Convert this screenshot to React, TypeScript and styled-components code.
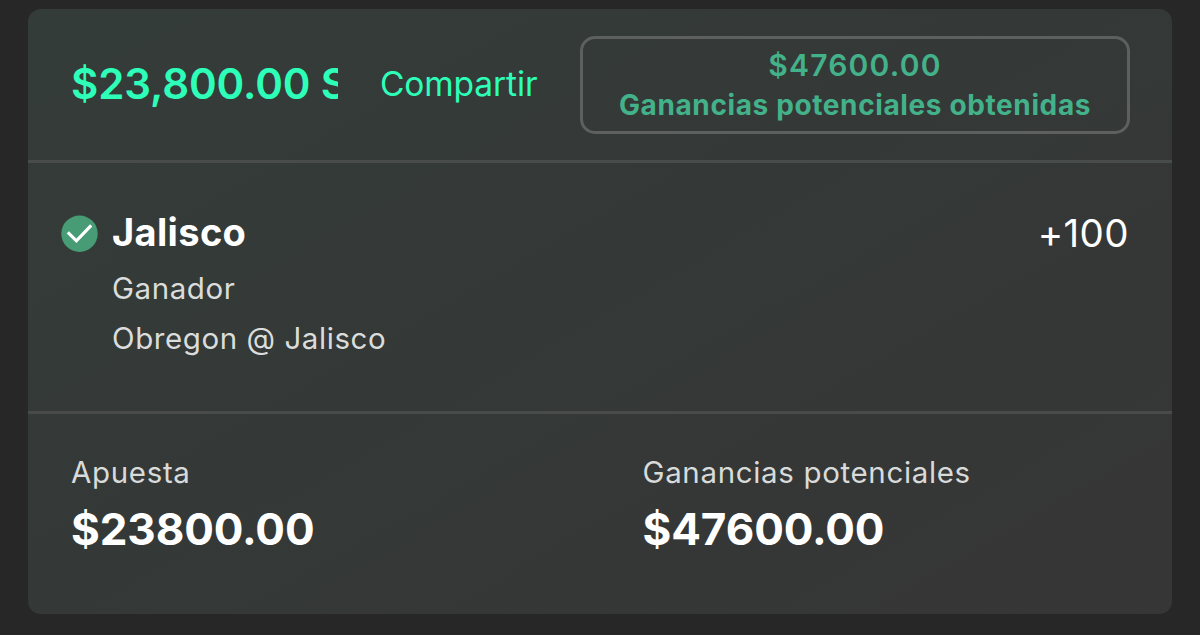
import styled, { createGlobalStyle } from 'styled-components';

const GlobalStyle = createGlobalStyle`
  * {
    box-sizing: border-box;
  }
  body {
    margin: 0;
    background-color: #272727;
    font-family: Inter, "Liberation Sans", sans-serif;
  }
`;

const Page = styled.main`
  height: 635px;
  padding: 9px 28px 21px;
  overflow: hidden;
`;

const Card = styled.article`
  display: flex;
  flex-direction: column;
  height: 605px;
  border-radius: 13px;
  background: linear-gradient(150deg, #343c39 0%, #343937 45%, #353736 75%, #373636 100%);
  overflow: hidden;
  white-space: nowrap;
`;

const Header = styled.header`
  display: flex;
  align-items: center;
  height: 154px;
  padding: 0 42px 0 43px;
  border-bottom: 3px solid #484c4b;
`;

const BetTitle = styled.h2`
  width: 267px;
  margin: 0 42px 2px 0;
  overflow: hidden;
  color: #2dffb9;
  font-size: 42px;
  font-weight: 600;
  line-height: 56px;
  letter-spacing: -0.1px;
`;

const ShareButton = styled.button`
  width: 158px;
  margin: 0 42px 2px 0;
  padding: 0;
  border: none;
  background: none;
  color: #2dffb9;
  font-family: inherit;
  font-size: 33.5px;
  line-height: 40px;
  letter-spacing: -0.1px;
  text-align: left;
  white-space: nowrap;
`;

const EarningsBox = styled.div`
  display: flex;
  flex-direction: column;
  flex: 1;
  align-items: center;
  justify-content: center;
  height: 98px;
  border: 3px solid #5d605f;
  border-radius: 15px;
  color: #43b189;
  line-height: 40px;
`;

const EarningsAmount = styled.span`
  font-size: 30px;
  font-weight: 600;
  letter-spacing: 1.2px;
`;

const EarningsLabel = styled.span`
  font-size: 28px;
  font-weight: 700;
  letter-spacing: 0.62px;
`;

const Selection = styled.section`
  display: flex;
  height: 251px;
  padding: 46px 43px 0 33px;
  border-bottom: 3px solid #484b4a;
`;

const StatusIcon = styled.svg`
  flex-shrink: 0;
  width: 37px;
  height: 37px;
  margin: 6px 14px 0 0;
`;

const SelectionInfo = styled.div`
  flex: 1;
`;

const Team = styled.h3`
  margin: 0 0 8px;
  color: #ffffff;
  font-size: 38px;
  font-weight: 700;
  line-height: 46px;
  letter-spacing: 0.35px;
`;

const Detail = styled.p`
  margin: 0;
  color: #dbdddc;
  font-size: 29.5px;
  line-height: 50px;
  letter-spacing: 0.57px;
`;

const Odds = styled.span`
  color: #ffffff;
  font-size: 38.5px;
  line-height: 48px;
  letter-spacing: 0.4px;
`;

const Footer = styled.footer`
  display: grid;
  grid-template-columns: 1fr 1fr;
  padding: 38px 0 0 43px;
`;

const Stat = styled.div<{ $offset?: number }>`
  padding-left: ${props => props.$offset || 0}px;
`;

const StatLabel = styled.p`
  margin: 0 0 9px;
  color: #d9dbda;
  font-size: 29.5px;
  line-height: 40px;
  letter-spacing: 0.65px;
`;

const StatValue = styled.p`
  margin: 0;
  color: #ffffff;
  font-size: 44px;
  font-weight: 700;
  line-height: 56px;
  letter-spacing: -0.1px;
`;

const WonIcon = () => (
  <StatusIcon viewBox="0 0 37 37">
    <circle cx="18.5" cy="18.7" r="18.2" fill="#479c75" />
    <path d="M6.8 17.4 L15.4 25.8 L30.2 10.4" fill="none" stroke="#ffffff" strokeWidth="3.2" />
  </StatusIcon>
);

export default function App() {
  return (
    <>
      <GlobalStyle />
      <Page>
        <Card>
          <Header>
            <BetTitle>$23,800.00 S</BetTitle>
            <ShareButton>Compartir</ShareButton>
            <EarningsBox>
              <EarningsAmount>$47600.00</EarningsAmount>
              <EarningsLabel>Ganancias potenciales obtenidas</EarningsLabel>
            </EarningsBox>
          </Header>
          <Selection>
            <WonIcon />
            <SelectionInfo>
              <Team>Jalisco</Team>
              <Detail>Ganador</Detail>
              <Detail>Obregon @ Jalisco</Detail>
            </SelectionInfo>
            <Odds>+100</Odds>
          </Selection>
          <Footer>
            <Stat>
              <StatLabel>Apuesta</StatLabel>
              <StatValue>$23800.00</StatValue>
            </Stat>
            <Stat $offset={21}>
              <StatLabel>Ganancias potenciales</StatLabel>
              <StatValue>$47600.00</StatValue>
            </Stat>
          </Footer>
        </Card>
      </Page>
    </>
  );
}
